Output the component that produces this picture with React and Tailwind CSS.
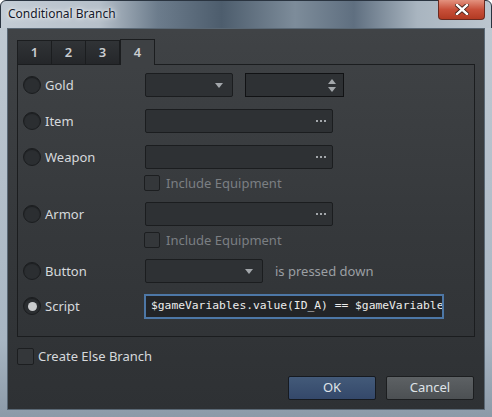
import React from 'react';

const ui = { fontFamily: '"Noto Sans", "Open Sans", sans-serif' };

function Radio({ checked }) {
  return (
    <span className="w-[18px] h-[18px] rounded-full bg-[#2b2e31] border border-[#1b1d1f] flex items-center justify-center shrink-0 shadow-[inset_0_1px_1px_rgba(0,0,0,0.35)]">
      {checked && <span className="w-[9px] h-[9px] rounded-full bg-[#c9cbcd]" />}
    </span>
  );
}

function Check({ className = '' }) {
  return <span className={`w-[16px] h-[16px] rounded-[2px] bg-[#34373a] border border-[#1c1e20] shrink-0 ${className}`} />;
}

function Caret() {
  return (
    <svg width="8" height="5" viewBox="0 0 8 5" className="shrink-0">
      <path d="M0 0h8L4 5z" fill="#a3a7ab" />
    </svg>
  );
}

function Combo({ w }) {
  return (
    <div className={`${w} h-[24px] rounded-[2px] bg-[#2e3134] border border-[#1b1d1f] flex items-center justify-end pr-[9px]`}>
      <Caret />
    </div>
  );
}

function Picker() {
  return (
    <div className="w-[188px] h-[24px] rounded-[2px] bg-[#2e3134] border border-[#1b1d1f] flex items-center justify-end pr-[6px]">
      <span className="flex gap-[2px]">
        <span className="w-[2px] h-[2px] bg-[#a3a7ab]" />
        <span className="w-[2px] h-[2px] bg-[#a3a7ab]" />
        <span className="w-[2px] h-[2px] bg-[#a3a7ab]" />
      </span>
    </div>
  );
}

function Row({ label, checked, mt, children }) {
  return (
    <div className={`flex items-center h-[24px] ${mt}`}>
      <div className="w-[122px] flex items-center gap-[4px]">
        <Radio checked={checked} />
        <span className="text-[13px] leading-[18px] text-[#d6d9dc]">{label}</span>
      </div>
      <div className="flex items-center">{children}</div>
    </div>
  );
}

function Equip({ mt }) {
  return (
    <div className={`flex items-center h-[16px] gap-[6px] pl-[121px] ${mt}`}>
      <Check />
      <span className="text-[13px] leading-[16px] text-[#7b7f83]">Include Equipment</span>
    </div>
  );
}

export default function App() {
  return (
    <div className="w-[492px] h-[417px] relative overflow-hidden bg-white" style={ui}>
      {/* window frame */}
      <div className="absolute inset-0 rounded-t-[6px] border border-[#2a3440] bg-[linear-gradient(90deg,#c3ccd5_0%,#b6c0ca_20%,#6c7c8c_32%,#4d5d6d_45%,#7d8c9a_60%,#5f6f80_72%,#a9b5c0_85%,#bcc6cf_100%)]" />
      <div className="absolute left-0 right-0 top-[28px] bottom-0 bg-[linear-gradient(180deg,#bfc9d2,#a8b6c3_80%,#8c9aa8)]" />

      <div className="absolute left-0 right-0 top-0 h-[28px] flex items-start">
        <span className="ml-[8px] mt-[5px] text-[12px] text-[#14182a] [text-shadow:0_0_6px_rgba(255,255,255,0.95),0_0_3px_rgba(255,255,255,0.9)]">
          Conditional Branch
        </span>
        <div className="ml-auto mr-[7px] w-[47px] h-[20px] rounded-b-[4px] border border-[#6a2a20] border-t-0 bg-[linear-gradient(180deg,#e3927f,#c8503a_50%,#b23a22)] flex items-center justify-center">
          <svg width="14" height="11" viewBox="0 0 14 11">
            <path d="M2 1l10 9M12 1L2 10" stroke="#3a1a14" strokeWidth="4" strokeLinecap="square" />
            <path d="M2 1l10 9M12 1L2 10" stroke="#ffffff" strokeWidth="2.4" strokeLinecap="square" />
          </svg>
        </div>
      </div>

      {/* client area */}
      <div className="absolute left-[7px] right-[7px] top-[28px] bottom-[7px] border border-[#5a6875] bg-[linear-gradient(180deg,#404346,#35383b_55%,#2e3134)] flex flex-col pl-[9px] pr-[9px] pt-[10px]">
        {/* tabs */}
        <div className="flex items-end h-[25px]">
          {['1', '2', '3'].map((t) => (
            <div key={t} className="w-[35px] h-[24px] -mr-px border border-[#1b1d1f] border-b-0 bg-[linear-gradient(180deg,#303336,#25272a)] flex items-center justify-center text-[13px] text-[#c9ccd0] font-semibold">
              {t}
            </div>
          ))}
          <div className="ml-[1px] w-[35px] h-[26px] border border-[#1b1d1f] border-b-0 bg-[#3e4144] flex items-center justify-center text-[13px] text-[#c9ccd0] font-semibold relative z-10 -mb-px">
            4
          </div>
        </div>

        <div className="h-[273px] border border-[#1b1d1f] flex flex-col pl-[5px]">
          <Row label="Gold" mt="mt-[8px]">
            <Combo w="w-[88px]" />
            <div className="ml-[12px] w-[99px] h-[24px] bg-[#2e3134] border border-[#111214] flex flex-col items-end justify-center pr-[7px] gap-[3px]">
              <svg width="8" height="5" viewBox="0 0 8 5"><path d="M4 0l4 5H0z" fill="#a3a7ab" /></svg>
              <svg width="8" height="5" viewBox="0 0 8 5"><path d="M0 0h8L4 5z" fill="#a3a7ab" /></svg>
            </div>
          </Row>
          <Row label="Item" mt="mt-[12px]"><Picker /></Row>
          <Row label="Weapon" mt="mt-[12px]"><Picker /></Row>
          <Equip mt="mt-[6px]" />
          <Row label="Armor" mt="mt-[11px]"><Picker /></Row>
          <Equip mt="mt-[6px]" />
          <Row label="Button" mt="mt-[11px]">
            <Combo w="w-[118px]" />
            <span className="ml-[12px] text-[13px] leading-[18px] text-[#9b9fa3]">is pressed down</span>
          </Row>
          <Row label="Script" checked mt="mt-[11px]">
            <div className="w-[300px] h-[25px] -ml-px border-2 border-[#4d77a6] bg-[#222427] flex items-center pl-[5px] overflow-hidden">
              <span className="whitespace-nowrap text-[11.3px] text-[#ececec]" style={{ fontFamily: '"DejaVu Sans Mono", monospace' }}>
                $gameVariables.value(ID_A) == $gameVariables.value(ID_B)
              </span>
            </div>
          </Row>
        </div>

        <div className="flex items-center h-[17px] gap-[4px] mt-[11px]">
          <Check className="w-[17px] h-[17px]" />
          <span className="text-[13px] leading-[17px] text-[#d6d9dc]">Create Else Branch</span>
        </div>

        <div className="flex justify-end gap-[10px] mt-[11px] pr-[1px]">
          <button className="w-[88px] h-[24px] rounded-[2px] border border-[#161a20] bg-[linear-gradient(180deg,#435a79,#34486a)] text-[13px] text-[#dfe3e8]">OK</button>
          <button className="w-[88px] h-[24px] rounded-[2px] border border-[#1c1e20] bg-[linear-gradient(180deg,#5d6164,#4c5053)] text-[13px] text-[#dfe3e8]">Cancel</button>
        </div>
      </div>
    </div>
  );
}
